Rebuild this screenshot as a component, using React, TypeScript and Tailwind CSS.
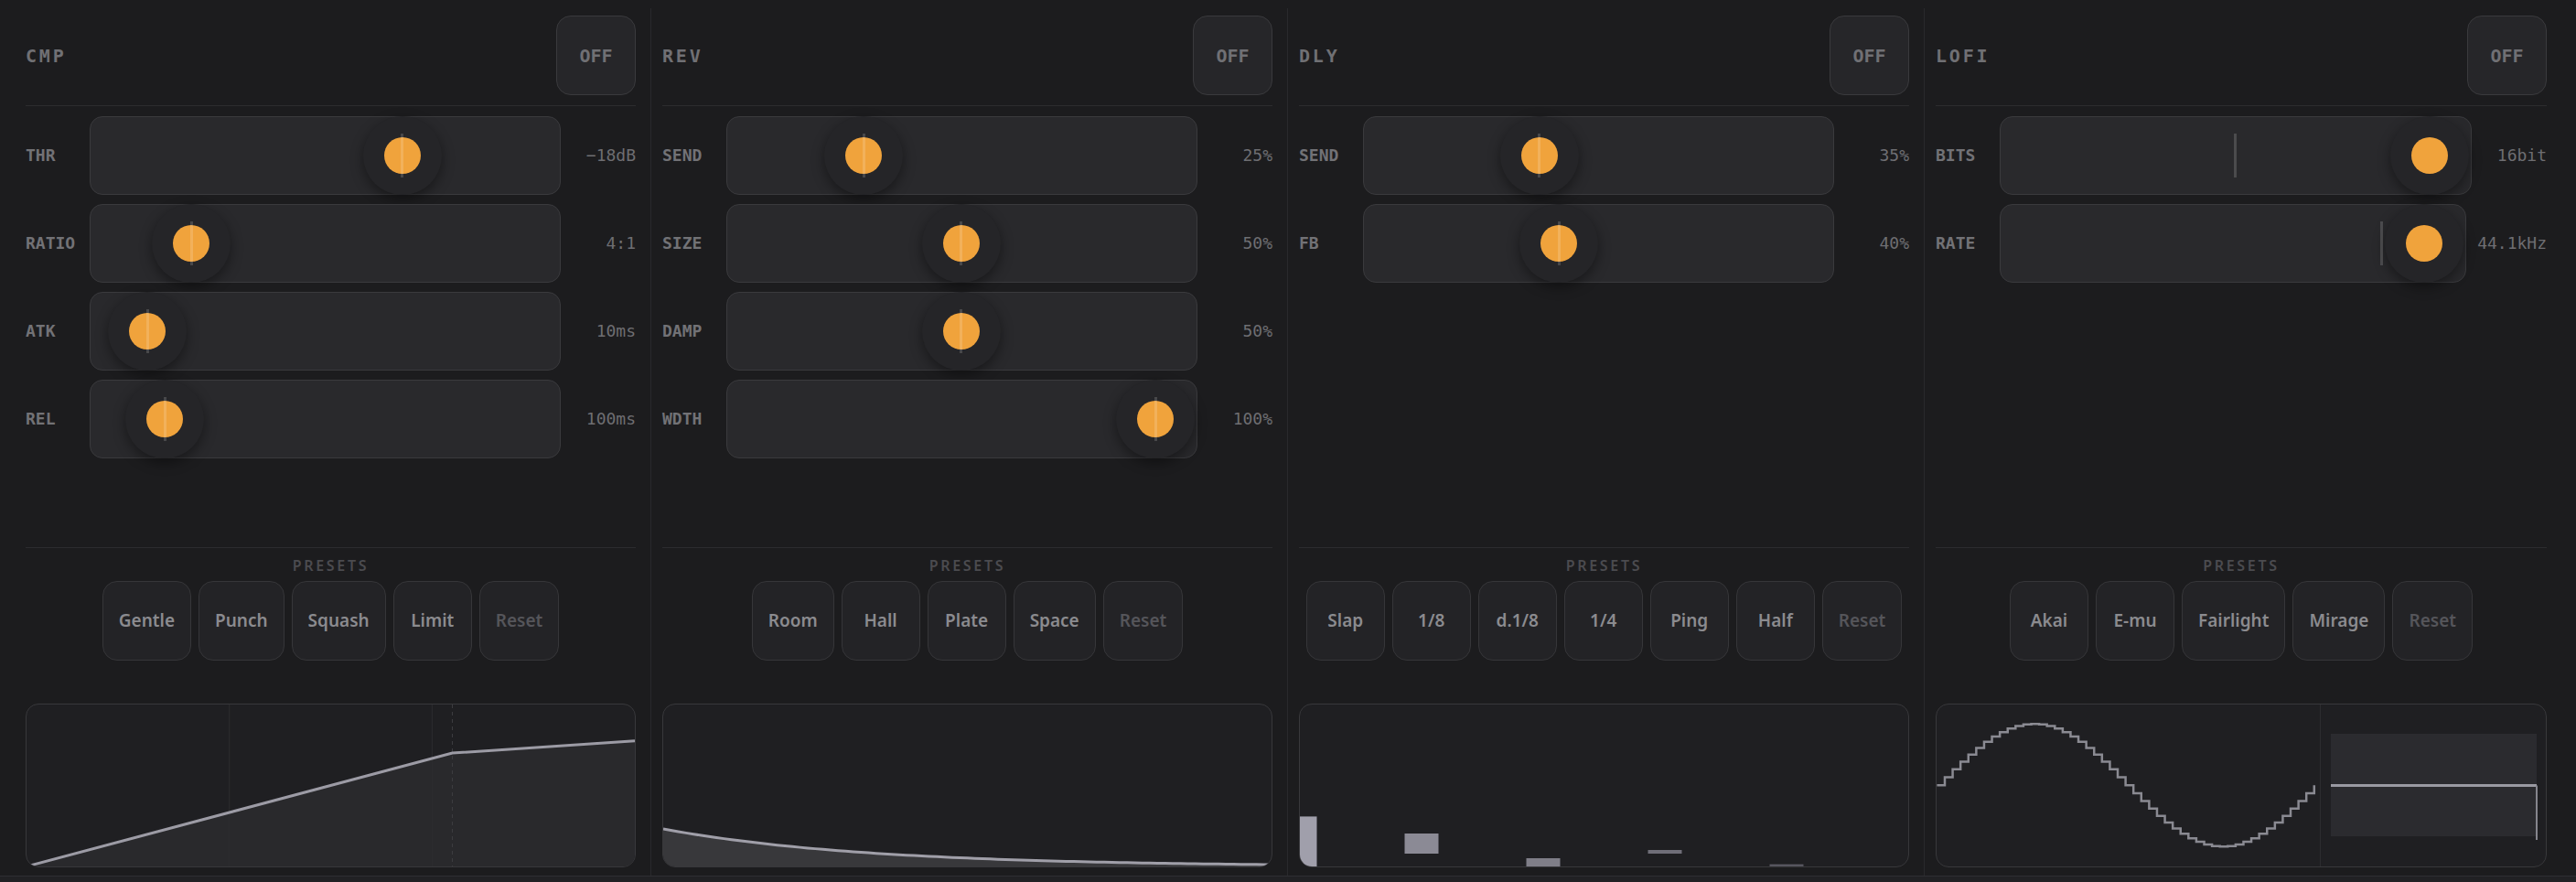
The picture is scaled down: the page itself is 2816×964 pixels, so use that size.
import React from "react";

type SliderDef = { label: string; v: number; line?: number; value: string };

const MONO = "font-['DejaVu_Sans_Mono',monospace]";
const SANS = "font-['Noto_Sans',sans-serif]";

function Slider({ s }: { s: SliderDef }) {
  const line = s.line ?? s.v;
  return (
    <div className="flex items-center gap-3 h-[86px]">
      <span className={`${MONO} w-[58px] text-[18px] font-bold text-[#727276] leading-none`}>{s.label}</span>
      <div className="relative flex-1 h-[86px] rounded-[14px] border border-[#3a3a3d] bg-[#29292c]">
        <div
          className="absolute top-1/2 -translate-y-1/2 w-[86px] h-[86px] rounded-full bg-[#252528] shadow-[0_5px_14px_rgba(0,0,0,0.4)] flex items-center justify-center"
          style={{ left: `calc(${s.v} * (100% - 88px) + 0px)` }}
        >
          <div className="w-[40px] h-[40px] rounded-full bg-[#f0a33c]" />
        </div>
        <div
          className="absolute top-1/2 -translate-y-1/2 w-[3px] h-[48px] bg-white/[0.16]"
          style={{ left: `calc(${line} * (100% - 88px) + 41.5px)` }}
        />
      </div>
      <span className={`${MONO} min-w-[70px] text-right text-[18px] text-[#6e6e72] leading-none`}>{s.value}</span>
    </div>
  );
}

function PresetButton({ label, dim }: { label: string; dim?: boolean }) {
  return (
    <button
      className={`${SANS} h-[87px] min-w-[86px] px-[17px] rounded-[16px] border border-[#363639] bg-[#232326] text-[19px] font-semibold ${
        dim ? "text-[#55555a]" : "text-[#8b8b8f]"
      }`}
    >
      {label}
    </button>
  );
}

function CmpChart() {
  const W = 665, H = 177;
  const x = (db: number) => ((db + 60) / 60) * W;
  const y = (o: number) => H - ((o + 60) / 60) * H;
  const pts = `${x(-60)},${y(-60)} ${x(-18)},${y(-18)} ${x(0)},${y(-13.5)}`;
  return (
    <svg width="100%" height="100%" viewBox={`0 0 ${W} ${H}`} preserveAspectRatio="none">
      <path d={`M0,${H} L${x(-18)},${y(-18)} L${W},${y(-13.5)} L${W},${H} Z`} fill="#29292c" />
      <line x1={W / 3} y1={0} x2={W / 3} y2={H} stroke="#2c2c2f" strokeWidth={1} />
      <line x1={(2 * W) / 3} y1={0} x2={(2 * W) / 3} y2={H} stroke="#2c2c2f" strokeWidth={1} />
      <line x1={x(-18)} y1={0} x2={x(-18)} y2={H} stroke="#3c3c40" strokeWidth={1} strokeDasharray="4 4" />
      <polyline points={pts} fill="none" stroke="#9c9ba5" strokeWidth={3} />
    </svg>
  );
}

function RevChart() {
  const W = 665, H = 177;
  const n = 80;
  const pts: string[] = [];
  for (let i = 0; i <= n; i++) {
    const t = i / n;
    pts.push(`${(t * W).toFixed(2)},${(H - 41 * Math.exp(-3 * t)).toFixed(2)}`);
  }
  return (
    <svg width="100%" height="100%" viewBox={`0 0 ${W} ${H}`} preserveAspectRatio="none">
      <path d={`M0,${H} L${pts.join(" L")} L${W},${H} Z`} fill="#38383b" />
      <polyline points={pts.join(" ")} fill="none" stroke="#a09fa9" strokeWidth={3} />
    </svg>
  );
}

function DlyChart() {
  const W = 665, H = 177;
  const bars = [
    { c: 0, y1: 122.4, y2: 177, fill: "#a09fab" },
    { c: 133, y1: 141, y2: 163, fill: "#8b8a95" },
    { c: 266, y1: 168, y2: 177, fill: "#7f7e88" },
    { c: 399, y1: 159, y2: 163, fill: "#6f6e78" },
    { c: 532, y1: 174.7, y2: 176.7, fill: "#605f69" },
  ];
  return (
    <svg width="100%" height="100%" viewBox={`0 0 ${W} ${H}`} preserveAspectRatio="none">
      {bars.map((b, i) => (
        <rect key={i} x={b.c - 18.5} y={b.y1} width={37} height={b.y2 - b.y1} fill={b.fill} />
      ))}
    </svg>
  );
}

function LofiWave() {
  const W = 419, H = 177;
  const N = 48, span = 412.4, x0 = 0.4, cy = 88.2, A = 67;
  let d = `M${x0},${cy}`;
  for (let i = 0; i < N; i++) {
    const yi = cy - A * Math.sin((2 * Math.PI * i) / N);
    const xi = x0 + (i * span) / N;
    const xn = x0 + ((i + 1) * span) / N;
    d += ` L${xi.toFixed(2)},${yi.toFixed(2)} L${xn.toFixed(2)},${yi.toFixed(2)}`;
  }
  d += ` L${(x0 + span).toFixed(2)},${cy}`;
  return (
    <svg width="100%" height="100%" viewBox={`0 0 ${W} ${H}`} preserveAspectRatio="none">
      <path d={d} fill="none" stroke="#8a8a92" strokeWidth={2.5} strokeLinejoin="miter" />
    </svg>
  );
}

function LofiHold() {
  const W = 246, H = 177;
  return (
    <svg width="100%" height="100%" viewBox={`0 0 ${W} ${H}`} preserveAspectRatio="none">
      <rect x={11} y={32} width={225} height={112} fill="#2b2b2f" />
      <line x1={11} y1={88.5} x2={236} y2={88.5} stroke="#9a9aa2" strokeWidth={3} />
      <line x1={236} y1={88.5} x2={236} y2={148} stroke="#85858d" strokeWidth={2} />
    </svg>
  );
}

type Col = {
  title: string;
  sliders: SliderDef[];
  presets: string[];
  chart: React.ReactNode;
  last?: boolean;
};

function Column({ c }: { c: Col }) {
  return (
    <div className={`flex flex-col h-[948px] pl-3 pr-4 pt-2 pb-[9px] ${c.last ? "" : "border-r border-[#29292c]"}`}>
      <div className="flex items-center justify-between pb-[11px] border-b border-[#2c2c2f]">
        <span className={`${MONO} text-[20px] font-bold tracking-[0.14em] text-[#707074]`}>{c.title}</span>
        <button className={`${MONO} w-[87px] h-[87px] rounded-[16px] border border-[#3a3a3d] bg-[#262629] text-[20px] font-bold text-[#707074]`}>
          OFF
        </button>
      </div>
      <div className="flex-1 flex flex-col gap-[10px] pt-[11px]">
        {c.sliders.map((s) => (
          <Slider key={s.label} s={s} />
        ))}
      </div>
      <div className="border-t border-[#2c2c2f] pt-[11px] flex flex-col items-center">
        <span className={`${SANS} text-[16px] leading-[16px] font-semibold tracking-[0.17em] text-[#4b4b4f]`}>PRESETS</span>
        <div className="flex gap-2 mt-[9px]">
          {c.presets.map((p) => (
            <PresetButton key={p} label={p} />
          ))}
          <PresetButton label="Reset" dim />
        </div>
      </div>
      <div className="mt-[47px] h-[179px] rounded-[14px] border border-[#38383b] bg-[#1f1f22] overflow-hidden">
        {c.chart}
      </div>
    </div>
  );
}

export default function App() {
  const cols: Col[] = [
    {
      title: "CMP",
      sliders: [
        { label: "THR", v: 0.7, value: "\u221218dB" },
        { label: "RATIO", v: 0.158, value: "4:1" },
        { label: "ATK", v: 0.045, value: "10ms" },
        { label: "REL", v: 0.09, value: "100ms" },
      ],
      presets: ["Gentle", "Punch", "Squash", "Limit"],
      chart: <CmpChart />,
    },
    {
      title: "REV",
      sliders: [
        { label: "SEND", v: 0.25, value: "25%" },
        { label: "SIZE", v: 0.5, value: "50%" },
        { label: "DAMP", v: 0.5, value: "50%" },
        { label: "WDTH", v: 1, value: "100%" },
      ],
      presets: ["Room", "Hall", "Plate", "Space"],
      chart: <RevChart />,
    },
    {
      title: "DLY",
      sliders: [
        { label: "SEND", v: 0.35, value: "35%" },
        { label: "FB", v: 0.4, value: "40%" },
      ],
      presets: ["Slap", "1/8", "d.1/8", "1/4", "Ping", "Half"],
      chart: <DlyChart />,
    },
    {
      title: "LOFI",
      sliders: [
        { label: "BITS", v: 1, line: 0.5, value: "16bit" },
        { label: "RATE", v: 1, line: 0.89, value: "44.1kHz" },
      ],
      presets: ["Akai", "E-mu", "Fairlight", "Mirage"],
      chart: (
        <div className="flex h-full">
          <div className="w-[419px] h-full">
            <LofiWave />
          </div>
          <div className="flex-1 h-full border-l border-[#2c2c2f]">
            <LofiHold />
          </div>
        </div>
      ),
      last: true,
    },
  ];
  return (
    <div className="w-[2816px] h-[964px] bg-[#1c1c1e] flex flex-col overflow-hidden">
      <div className="grid grid-cols-4 px-4 pt-[9px] h-[957px]">
        {cols.map((c) => (
          <Column key={c.title} c={c} />
        ))}
      </div>
      <div className="flex-1 border-t border-[#2f2f32] bg-[#212124]" />
    </div>
  );
}
